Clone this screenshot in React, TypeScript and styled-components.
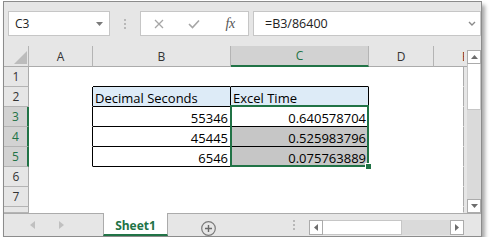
import React from 'react'
import styled, { createGlobalStyle } from 'styled-components'

const GREEN = '#217346'
const CHROME = '#e6e6e6'
const LINE = '#b4b4b4'
const UI_FONT = `'Open Sans', 'Noto Sans', sans-serif`

const GlobalStyle = createGlobalStyle`
  body {
    margin: 0;
    background: #ffffff;
    font-family: ${UI_FONT};
  }
`

const Window = styled.div`
  margin: 1px 0 0 3px;
  width: 479px;
  height: 236px;
  box-sizing: border-box;
  border: 1px solid #8c8c8c;
  background: ${CHROME};
  box-shadow: 3px 4px 4px rgba(0, 0, 0, 0.35);
  display: flex;
  flex-direction: column;
`

const FormulaBar = styled.div`
  flex: none;
  height: 44px;
  box-sizing: border-box;
  padding: 9px 0 0 4px;
  display: flex;
  align-items: flex-start;
`

const InputBox = styled.div<{ width: number }>`
  width: ${(p) => p.width}px;
  height: 25px;
  box-sizing: border-box;
  border: 1px solid #c6c6c6;
  background: #ffffff;
  display: flex;
  align-items: center;
  justify-content: space-between;
  font-size: 12px;
  color: #222222;
`

const NameBox = styled(InputBox)`
  padding: 0 6px 0 6px;
`

const FormulaInput = styled(InputBox)`
  margin-left: 4px;
  padding: 0 4px 0 11px;
  font-size: 12.5px;
`

const Grip = styled.div`
  width: 30px;
  height: 25px;
  display: flex;
  flex-direction: column;
  align-items: center;
  justify-content: center;
  gap: 2px;

  span {
    width: 2px;
    height: 2px;
    background: #b8b8b8;
  }
`

const FuncBox = styled.div`
  width: 109px;
  height: 25px;
  box-sizing: border-box;
  border: 1px solid #c6c6c6;
  background: #ffffff;
  display: grid;
  grid-template-columns: repeat(3, 1fr);
  align-items: center;
  justify-items: center;
`

const Fx = styled.span`
  font-family: 'Liberation Serif', serif;
  font-style: italic;
  font-size: 14px;
  color: #555555;
  letter-spacing: -0.5px;
`

const SheetArea = styled.div`
  flex: none;
  height: 167px;
  display: flex;
`

const Grid = styled.div`
  position: relative;
  width: 463px;
  display: grid;
  grid-template-columns: 25px 64px 138px 138px 65px 33px;
  grid-template-rows: 21px repeat(7, 20px) 6px;
  background: ${CHROME};
  overflow: hidden;
`

const ColHead = styled.div<{ $active?: boolean }>`
  box-sizing: border-box;
  background: ${(p) => (p.$active ? '#d2d2d2' : CHROME)};
  border-right: 1px solid ${LINE};
  border-bottom: ${(p) => (p.$active ? `2px solid ${GREEN}` : '1px solid #ababab')};
  color: ${(p) => (p.$active ? GREEN : '#333333')};
  font-size: 12px;
  display: flex;
  align-items: center;
  justify-content: center;
`

const Corner = styled(ColHead)`
  align-items: flex-end;
  justify-content: flex-end;
  padding: 0 1px 2px 0;
`

const EdgeHead = styled(ColHead)`
  justify-content: flex-start;
  border-right: none;
  padding-left: 28px;
`

const EdgeLabel = styled.span`
  display: block;
  width: 2px;
  overflow: hidden;
  color: #6b1f1f;
`

const RowHead = styled.div<{ $active?: boolean }>`
  box-sizing: border-box;
  background: ${(p) => (p.$active ? '#d2d2d2' : CHROME)};
  border-bottom: 1px solid ${LINE};
  border-right: ${(p) => (p.$active ? `2px solid ${GREEN}` : '1px solid #ababab')};
  color: ${(p) => (p.$active ? GREEN : '#333333')};
  font-size: 12px;
  display: flex;
  align-items: center;
  justify-content: center;
  overflow: hidden;
`

const Cell = styled.div<{ $right?: string; $bottom?: string; $fill?: string; $num?: boolean; $edge?: boolean }>`
  box-sizing: border-box;
  background: ${(p) => p.$fill || '#ffffff'};
  border-right: 1px solid ${(p) => (p.$edge ? '#ababab' : p.$right || 'transparent')};
  border-bottom: 1px solid ${(p) => p.$bottom || 'transparent'};
  margin-right: ${(p) => (p.$edge ? '3px' : '0')};
  padding: 0 2px;
  font-family: 'Open Sans', 'Lato', sans-serif;
  font-size: 13px;
  line-height: 15px;
  color: #000000;
  white-space: nowrap;
  display: flex;
  align-items: flex-end;
  justify-content: ${(p) => (p.$num ? 'flex-end' : 'flex-start')};
`

const Selection = styled.div`
  position: absolute;
  left: 226px;
  top: 59px;
  width: 139px;
  height: 62px;
  box-sizing: border-box;
  border: 2px solid ${GREEN};
  pointer-events: none;
`

const FillHandle = styled.div`
  position: absolute;
  left: 361px;
  top: 117px;
  width: 7px;
  height: 7px;
  box-sizing: border-box;
  border: 1px solid #ffffff;
  background: ${GREEN};
`

const VScroll = styled.div`
  width: 14px;
  margin-top: 4px;
  display: flex;
  flex-direction: column;
  background: #dadada;
`

const ScrollButton = styled.div`
  flex: none;
  width: 14px;
  height: 14px;
  box-sizing: border-box;
  border: 1px solid #ababab;
  background: #ffffff;
  display: flex;
  align-items: center;
  justify-content: center;
`

const VThumb = styled.div`
  flex: none;
  height: 46px;
  box-sizing: border-box;
  border: 1px solid #c6c6c6;
  border-top: none;
  background: #ffffff;
`

const TabBar = styled.div`
  flex: 1;
  display: flex;
`

const NavSection = styled.div`
  width: 99px;
  box-sizing: border-box;
  border-top: 1px solid #ababab;
  display: flex;
  align-items: center;
  gap: 24px;
  padding: 0 0 0 26px;
`

const SheetTab = styled.div`
  width: 65px;
  box-sizing: border-box;
  background: #ffffff;
  border-left: 1px solid #ababab;
  border-right: 1px solid #ababab;
  border-bottom: 2px solid ${GREEN};
  color: ${GREEN};
  font-weight: 700;
  font-size: 12px;
  display: flex;
  align-items: center;
  justify-content: center;
  padding-top: 3px;
`

const RestSection = styled.div`
  flex: 1;
  box-sizing: border-box;
  border-top: 1px solid #ababab;
  display: flex;
  align-items: flex-start;
  padding-left: 33px;
`

const PlusButton = styled.div`
  margin-top: 5px;
  width: 15px;
  height: 15px;
`

const TabGrip = styled(Grip)`
  width: 3px;
  height: 12px;
  margin: 5px 0 0 76px;
`

const HScroll = styled.div`
  margin: 6px 0 0 14px;
  width: 155px;
  height: 15px;
  display: flex;
  background: #dadada;
`

const HButton = styled(ScrollButton)`
  height: 15px;
`

const HThumb = styled.div`
  width: 79px;
  box-sizing: border-box;
  border: 1px solid #c6c6c6;
  border-left: none;
  background: #ffffff;
`

const Tri = ({ dir, color = '#6d6d6d', w = 7, h = 4 }: { dir: 'up' | 'down' | 'left' | 'right'; color?: string; w?: number; h?: number }) => {
  const horiz = dir === 'left' || dir === 'right'
  const W = horiz ? h : w
  const H = horiz ? w : h
  const pts = {
    up: `0,${H} ${W},${H} ${W / 2},0`,
    down: `0,0 ${W},0 ${W / 2},${H}`,
    left: `${W},0 ${W},${H} 0,${H / 2}`,
    right: `0,0 0,${H} ${W},${H / 2}`,
  }[dir]
  return (
    <svg width={W} height={H} viewBox={`0 0 ${W} ${H}`}>
      <polygon points={pts} fill={color} />
    </svg>
  )
}

const COLS = ['A', 'B', 'C', 'D', 'E']
const DATA: Record<number, string[]> = {
  2: ['', 'Decimal Seconds', 'Excel Time'],
  3: ['', '55346', '0.640578704'],
  4: ['', '45445', '0.525983796'],
  5: ['', '6546', '0.075763889'],
}

const inTable = (r: number) => r >= 2 && r <= 5

const App = () => {
  const rows = [1, 2, 3, 4, 5, 6, 7, 8]

  return (
    <>
      <GlobalStyle />
      <Window>
        <FormulaBar>
          <NameBox width={102}>
            <span>C3</span>
            <Tri dir='down' color='#7a7a7a' />
          </NameBox>
          <Grip>
            <span />
            <span />
            <span />
          </Grip>
          <FuncBox>
            <svg width='10' height='10' viewBox='0 0 10 10'>
              <path d='M1 1 L9 9 M9 1 L1 9' stroke='#a6a6a6' strokeWidth='1.3' fill='none' />
            </svg>
            <svg width='12' height='10' viewBox='0 0 12 10'>
              <path d='M1 5 L4.5 8.5 L11 1.5' stroke='#a6a6a6' strokeWidth='1.6' fill='none' />
            </svg>
            <Fx>fx</Fx>
          </FuncBox>
          <FormulaInput width={228}>
            <span>=B3/86400</span>
            <svg width='8' height='5' viewBox='0 0 8 5'>
              <path d='M1 1 L4 4 L7 1' stroke='#8a8a8a' strokeWidth='1.4' fill='none' />
            </svg>
          </FormulaInput>
        </FormulaBar>

        <SheetArea>
          <Grid>
            <Corner>
              <svg width='13' height='13' viewBox='0 0 13 13'>
                <polygon points='0,13 13,13 13,0' fill='#bcbcbc' />
              </svg>
            </Corner>
            {COLS.map((c) =>
              c === 'E' ? (
                <EdgeHead key={c}>
                  <EdgeLabel>E</EdgeLabel>
                </EdgeHead>
              ) : (
                <ColHead key={c} $active={c === 'C'}>
                  {c}
                </ColHead>
              ),
            )}
            {rows.map((r) => (
              <React.Fragment key={r}>
                {/* row 8 is only a sliver, its number is hidden */}
                <RowHead $active={r >= 3 && r <= 5}>{r < 8 ? r : ''}</RowHead>
                {COLS.map((c, ci) => {
                  const text = DATA[r]?.[ci] ?? ''
                  const tableCol = c === 'B' || c === 'C'
                  let fill: string | undefined
                  if (r === 2 && tableCol) fill = '#ddebf7'
                  if ((r === 4 || r === 5) && c === 'C') fill = '#c6c6c6'
                  return (
                    <Cell
                      key={c}
                      $right={inTable(r) && ci <= 2 ? '#000000' : undefined}
                      $bottom={r >= 1 && r <= 5 && tableCol ? '#000000' : undefined}
                      $fill={fill}
                      $num={r >= 3}
                      $edge={c === 'E'}
                    >
                      {text}
                    </Cell>
                  )
                })}
              </React.Fragment>
            ))}
            <Selection />
            <FillHandle />
          </Grid>
          <VScroll>
            <ScrollButton>
              <Tri dir='up' />
            </ScrollButton>
            <VThumb />
            <div style={{ flex: 1 }} />
            <ScrollButton>
              <Tri dir='down' />
            </ScrollButton>
          </VScroll>
        </SheetArea>

        <TabBar>
          <NavSection>
            <Tri dir='left' color='#c0c0c0' w={8} h={5} />
            <Tri dir='right' color='#c0c0c0' w={8} h={5} />
          </NavSection>
          <SheetTab>Sheet1</SheetTab>
          <RestSection>
            <PlusButton>
              <svg width='15' height='15' viewBox='0 0 15 15'>
                <circle cx='7.5' cy='7.5' r='6.8' stroke='#7a7a7a' strokeWidth='1.2' fill='none' />
                <path d='M7.5 4 V11 M4 7.5 H11' stroke='#6a6a6a' strokeWidth='1.4' />
              </svg>
            </PlusButton>
            <TabGrip>
              <span />
              <span />
              <span />
            </TabGrip>
            <HScroll>
              <HButton>
                <Tri dir='left' w={7} h={4} />
              </HButton>
              <HThumb />
              <div style={{ flex: 1 }} />
              <HButton>
                <Tri dir='right' w={7} h={4} />
              </HButton>
            </HScroll>
          </RestSection>
        </TabBar>
      </Window>
    </>
  )
}

export default App
